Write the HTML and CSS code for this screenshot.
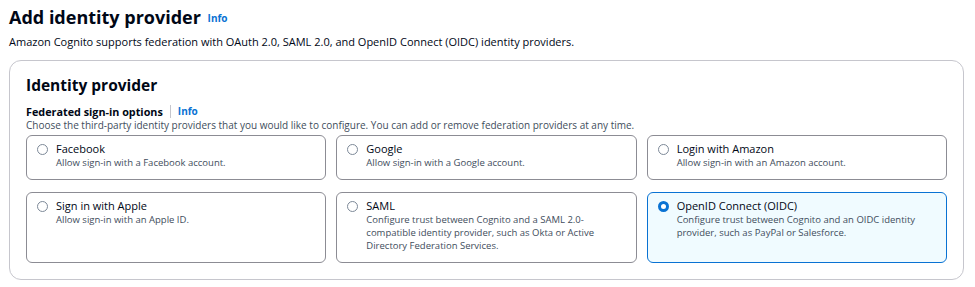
FILE: index.html
```html
<!DOCTYPE html>
<html lang="en">
<head>
  <meta charset="UTF-8">
  <title>Add identity provider</title>
  <link rel="stylesheet" href="styles.css">
</head>
<body>
  <div class="page">
    <!-- Page header -->
    <div class="page-header">
      <h1 class="page-title">Add identity provider <a class="info" href="#">Info</a></h1>
      <p class="page-desc">Amazon Cognito supports federation with OAuth 2.0, SAML 2.0, and OpenID Connect (OIDC) identity providers.</p>
    </div>

    <!-- Identity provider panel -->
    <div class="panel">
      <h2 class="panel-title">Identity provider</h2>
      <div class="field-label">Federated sign-in options <span class="divider"></span><a class="info" href="#">Info</a></div>
      <div class="field-desc">Choose the third-party identity providers that you would like to configure. You can add or remove federation providers at any time.</div>

      <div class="tiles">
        <div class="tile">
          <span class="radio"></span>
          <div class="tile-text">
            <div class="tile-title">Facebook</div>
            <div class="tile-desc">Allow sign-in with a Facebook account.</div>
          </div>
        </div>
        <div class="tile">
          <span class="radio"></span>
          <div class="tile-text">
            <div class="tile-title">Google</div>
            <div class="tile-desc">Allow sign-in with a Google account.</div>
          </div>
        </div>
        <div class="tile">
          <span class="radio"></span>
          <div class="tile-text">
            <div class="tile-title">Login with Amazon</div>
            <div class="tile-desc">Allow sign-in with an Amazon account.</div>
          </div>
        </div>
        <div class="tile">
          <span class="radio"></span>
          <div class="tile-text">
            <div class="tile-title">Sign in with Apple</div>
            <div class="tile-desc">Allow sign-in with an Apple ID.</div>
          </div>
        </div>
        <div class="tile">
          <span class="radio"></span>
          <div class="tile-text">
            <div class="tile-title">SAML</div>
            <div class="tile-desc">Configure trust between Cognito and a SAML 2.0-compatible identity provider, such as Okta or Active Directory Federation Services.</div>
          </div>
        </div>
        <div class="tile selected">
          <span class="radio checked"></span>
          <div class="tile-text">
            <div class="tile-title">OpenID Connect (OIDC)</div>
            <div class="tile-desc">Configure trust between Cognito and an OIDC identity provider, such as PayPal or Salesforce.</div>
          </div>
        </div>
      </div>
    </div>
  </div>
</body>
</html>
```

FILE: styles.css
```css
/* Global */
body {
  margin: 0;
  font-family: "Open Sans", "Noto Sans", sans-serif;
  color: #000716;
  background: #fff;
}

.page {
  padding: 4px 11px 0 9px;
}

.info {
  color: #0972d3;
  font-size: 10px;
  font-weight: 700;
  text-decoration: none;
}

/* Header */
.page-title {
  margin: 0;
  font-size: 18px;
  line-height: 26px;
  font-weight: 700;
}

.page-title .info {
  margin-left: 2px;
  vertical-align: 2px;
}

.page-desc {
  margin: 3px 0 0;
  font-size: 11px;
  line-height: 16px;
  color: #000716;
}

/* Panel */
.panel {
  margin-top: 10px;
  border: 1px solid #c6c6cd;
  border-radius: 12px;
  padding: 12px 16px 16px 16px;
}

.panel-title {
  margin: 0;
  font-size: 15.5px;
  line-height: 24px;
  font-weight: 700;
}

.field-label {
  margin-top: 8px;
  font-size: 10.8px;
  line-height: 13px;
  font-weight: 700;
  display: flex;
  align-items: center;
}

.divider {
  display: inline-block;
  width: 1px;
  height: 13px;
  background: #c6c6cd;
  margin: 0 7px 0 7px;
}

.field-desc {
  margin-top: 1px;
  font-size: 10px;
  line-height: 13px;
  color: #414d5c;
}

/* Tiles */
.tiles {
  margin-top: 3px;
  display: grid;
  grid-template-columns: repeat(3, 1fr);
  gap: 12px 10px;
}

.tile {
  border: 1px solid #8c8c94;
  border-radius: 6px;
  padding: 6px 10px 10px 10px;
  display: flex;
  align-items: flex-start;
  gap: 8px;
}

.tile.selected {
  background: #f0fbff;
  border-color: #0972d3;
}

.radio {
  flex: none;
  width: 9px;
  height: 9px;
  margin-top: 2px;
  border: 1.5px solid #7d8998;
  border-radius: 50%;
  background: #fff;
}

.radio.checked {
  border: 3.5px solid #0972d3;
  width: 5px;
  height: 5px;
}

.tile-title {
  font-size: 11px;
  line-height: 14px;
  font-weight: 500;
}

.tile-desc {
  font-size: 9.5px;
  line-height: 13px;
  color: #414d5c;
}
```
